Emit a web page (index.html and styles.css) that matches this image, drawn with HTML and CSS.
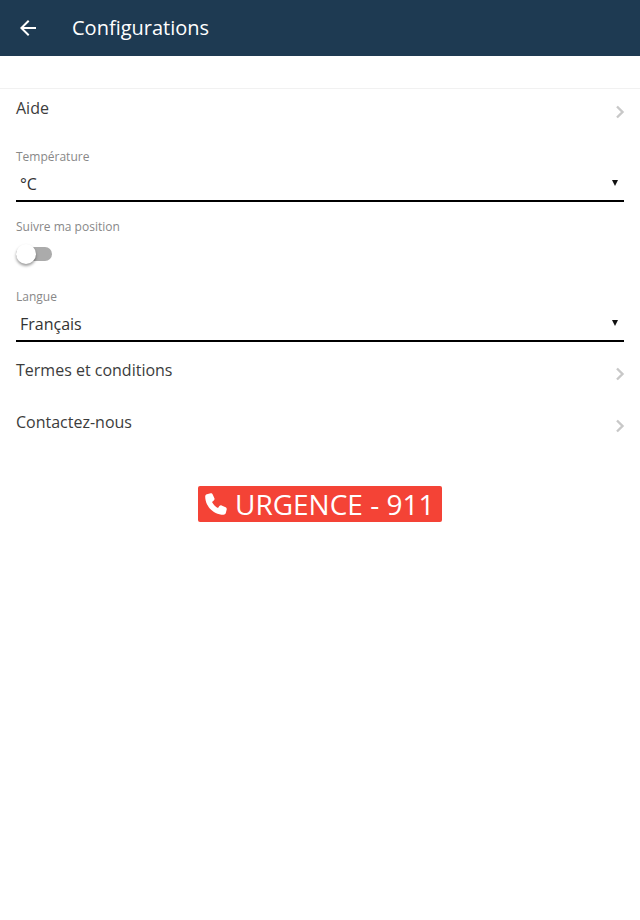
FILE: index.html
```html
<!DOCTYPE html>
<html lang="fr">
<head>
    <meta charset="UTF-8">
    <title>Configurations</title>
    <link rel="stylesheet" href="styles.css">
</head>
<body>
    <header class="toolbar">
        <svg class="back-icon" width="24" height="24" viewBox="0 0 24 24"><path d="M20 11H7.83l5.59-5.59L12 4l-8 8 8 8 1.41-1.41L7.83 13H20z" fill="#fff"/></svg>
        <h1 class="toolbar-title">Configurations</h1>
    </header>

    <div class="content">
        <div class="list-row first">
            <span>Aide</span>
            <svg class="chevron" width="10" height="14" viewBox="0 0 10 14"><path d="M2 1.500 7.500 7 2 12.500" fill="none" stroke="#c8c8c8" stroke-width="2.400"/></svg>
        </div>

        <div class="field">
            <div class="field-label">Température</div>
            <div class="select">
                <span>°C</span>
                <span class="select-arrow"></span>
            </div>
        </div>

        <div class="field field-position">
            <div class="field-label">Suivre ma position</div>
            <div class="toggle"><div class="toggle-knob"></div></div>
        </div>

        <div class="field field-lang">
            <div class="field-label">Langue</div>
            <div class="select">
                <span>Français</span>
                <span class="select-arrow"></span>
            </div>
        </div>

        <div class="list-row">
            <span>Termes et conditions</span>
            <svg class="chevron" width="10" height="14" viewBox="0 0 10 14"><path d="M2 1.500 7.500 7 2 12.500" fill="none" stroke="#c8c8c8" stroke-width="2.400"/></svg>
        </div>
        <div class="list-row">
            <span>Contactez-nous</span>
            <svg class="chevron" width="10" height="14" viewBox="0 0 10 14"><path d="M2 1.500 7.500 7 2 12.500" fill="none" stroke="#c8c8c8" stroke-width="2.400"/></svg>
        </div>

        <div class="urgent-wrap">
            <div class="urgent">
                <svg class="phone-icon" width="24" height="24" viewBox="0 0 24 24"><path d="M6.600 1.300 2.900 2.200C1.900 2.500 1.200 3.400 1.200 4.500 1.200 14.300 9.700 22.800 19.500 22.800c1.100 0 2-.7 2.300-1.700l.9-3.700c.2-.9-.3-1.800-1.100-2.200l-4-1.700c-.8-.3-1.700-.1-2.200.6l-1.400 1.800c-2.600-1.300-4.700-3.400-6-6l1.800-1.400c.7-.5.9-1.400.6-2.200L8.700 2.500c-.4-.9-1.200-1.400-2.100-1.200z" fill="#fff"/></svg>
                <span>URGENCE - 911</span>
            </div>
        </div>
    </div>
</body>
</html>
```

FILE: styles.css
```css
body {
    margin: 0;
    padding: 0;
    background-color: #fff;
    font-family: "Open Sans", sans-serif;
    color: #3c3c3c;
}

.toolbar {
    height: 56px;
    background-color: #1e3a52;
    display: flex;
    align-items: center;
    padding-left: 16px;
}

.back-icon {
    margin-right: 32px;
}

.toolbar-title {
    margin: 0 0 2px;
    font-size: 20px;
    font-weight: 500;
    color: #fff;
}

.content {
    padding-top: 32px;
}

.list-row {
    height: 52px;
    padding: 8px 16px 0;
    box-sizing: border-box;
    display: flex;
    justify-content: space-between;
    font-size: 16px;
    line-height: 22px;
}

.list-row.first {
    border-top: 1px solid #f1f1f1;
    height: 61px;
}

.chevron {
    margin-top: 8px;
    margin-right: -1px;
}

.field {
    padding: 0 16px;
}

.field-label {
    font-size: 12px;
    line-height: 16px;
    color: #888;
}

.select {
    display: flex;
    justify-content: space-between;
    align-items: center;
    height: 32px;
    padding: 3px 4px 0;
    font-size: 16px;
    color: #333;
    border-bottom: 2px solid #000;
}

.select-arrow {
    width: 0;
    height: 0;
    border-left: 3px solid transparent;
    border-right: 3px solid transparent;
    border-top: 6px solid #111;
    margin-right: 2px;
    margin-bottom: 2px;
}

.field-position {
    padding-top: 17px;
    height: 70px;
}

.toggle {
    width: 36px;
    height: 14px;
    margin-top: 12px;
    border-radius: 7px;
    background-color: #ababab;
    position: relative;
}

.toggle-knob {
    position: absolute;
    left: 0;
    top: -3px;
    width: 20px;
    height: 20px;
    border-radius: 50%;
    background-color: #fff;
    box-shadow: 0 2px 3px rgba(0, 0, 0, 0.4);
}

.field-lang {
    margin-bottom: 9px;
}

.urgent-wrap {
    display: flex;
    justify-content: center;
    margin-top: 31px;
}

.urgent {
    display: flex;
    align-items: center;
    width: 244px;
    height: 36px;
    box-sizing: border-box;
    padding-left: 6px;
    background-color: #f44336;
    border-radius: 2px;
    color: #fff;
    font-size: 28px;
}

.phone-icon {
    margin-right: 7px;
}
```
